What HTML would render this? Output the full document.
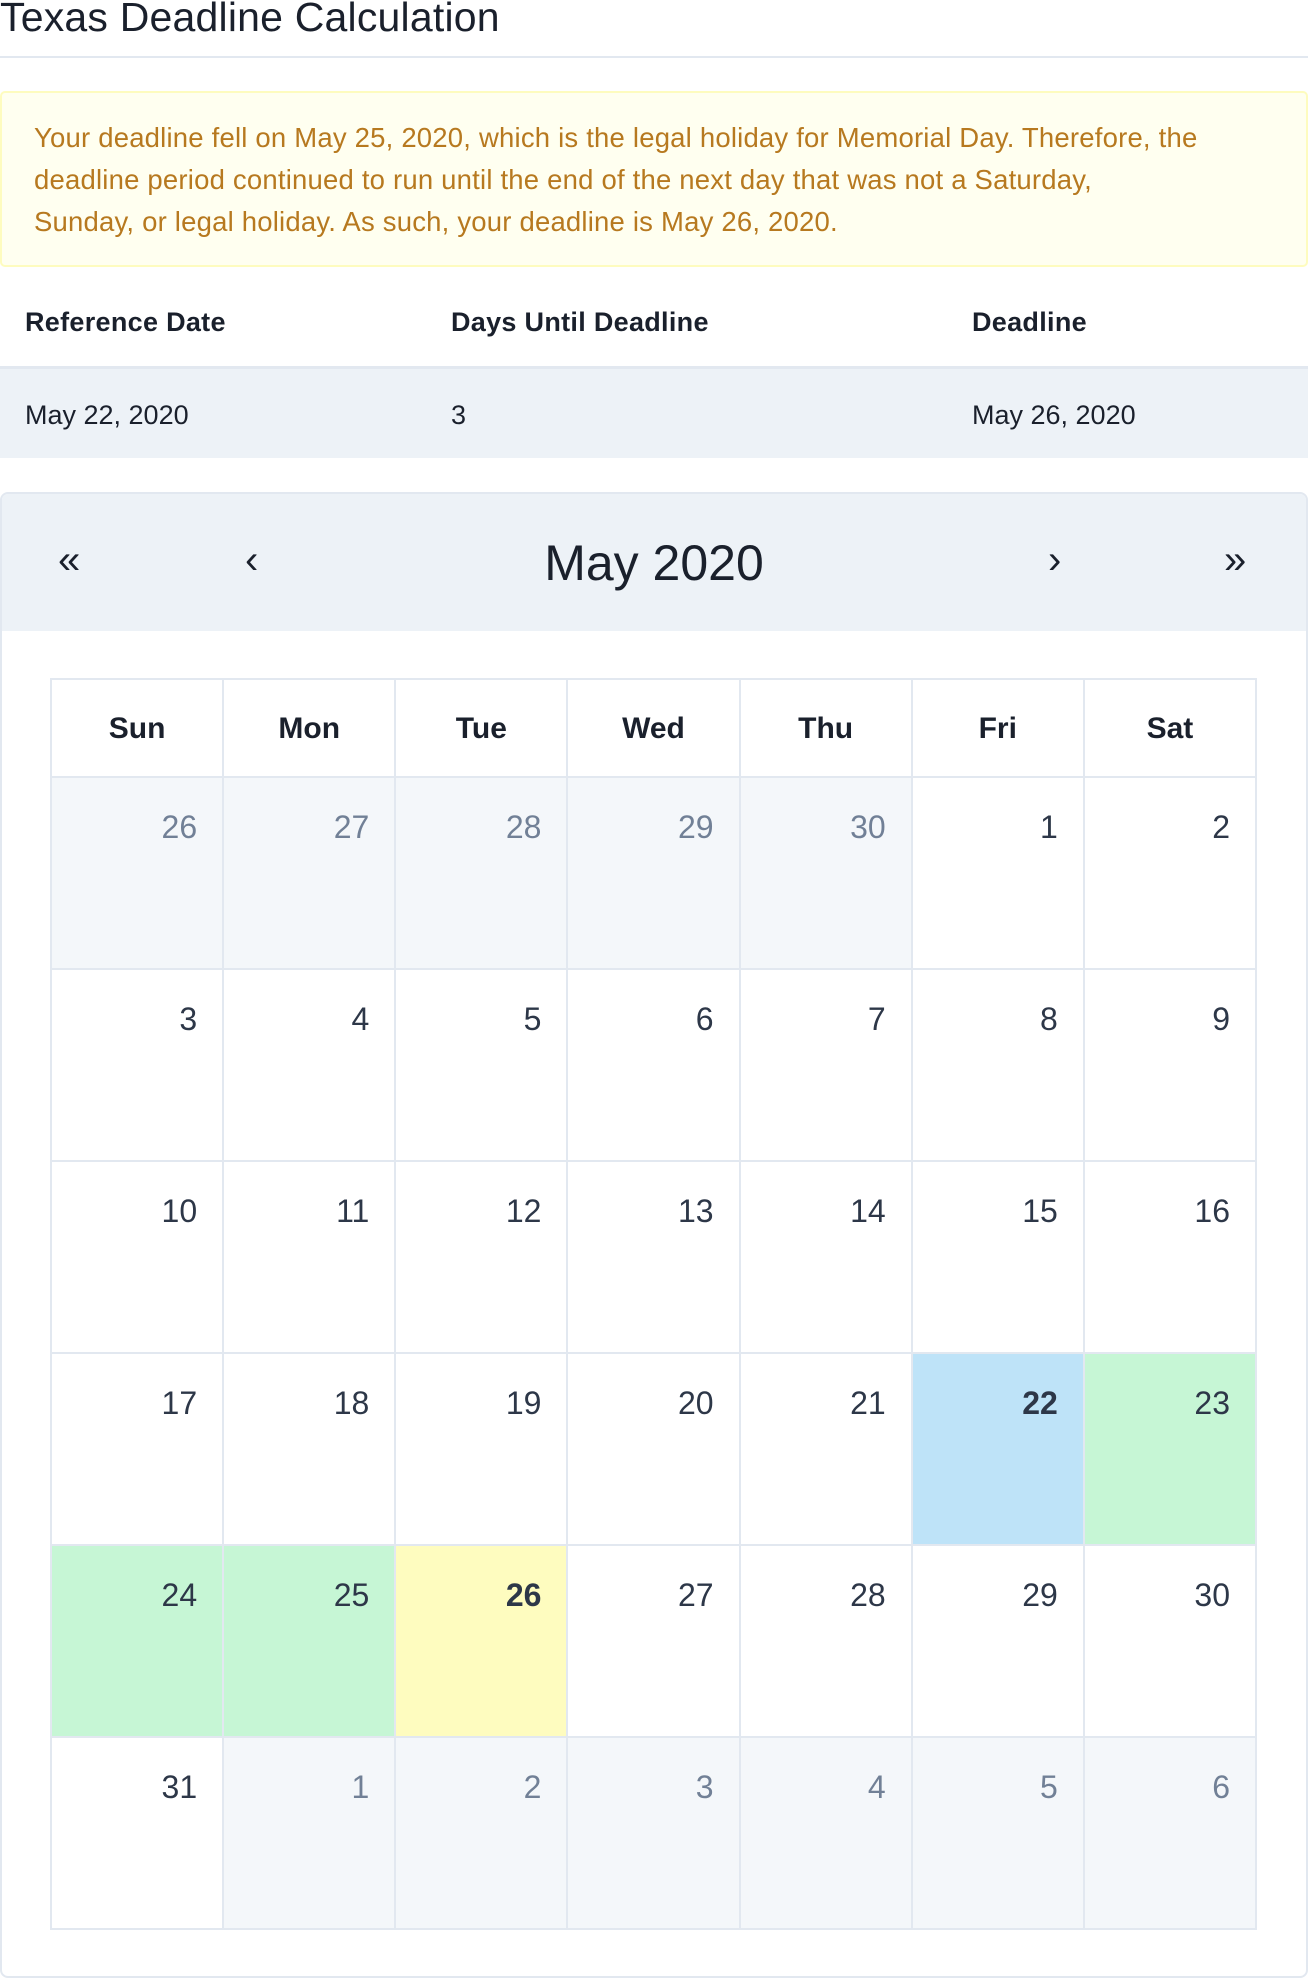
<!DOCTYPE html>
<html><head><meta charset="utf-8"><style>
*{box-sizing:border-box;margin:0;padding:0}
body{width:1308px;height:1980px;background:#fff;font-family:"Liberation Sans",sans-serif;color:#1a202c;position:relative;overflow:hidden}
h1{position:absolute;left:0;top:-8px;font-size:41px;font-weight:400;color:#1a202c;line-height:50px;letter-spacing:0.2px}
.hr{position:absolute;left:0;top:56px;width:1308px;height:2px;background:#e2e8f0}
.alert{position:absolute;left:0;top:91px;width:1308px;height:176px;background:#fffff0;border:2px solid #fefcbf;border-radius:5px;color:#b7791f;font-size:27.5px;line-height:42px;padding:24px 32px;white-space:nowrap;letter-spacing:0.2px}
.th{position:absolute;top:307px;font-size:27px;font-weight:700;color:#1a202c;letter-spacing:0.3px}
.trow{position:absolute;left:0;top:366px;width:1308px;height:92px;background:#edf2f7;border-top:3px solid #e2e8f0}
.td{position:absolute;top:400px;font-size:27px;color:#1a202c}
.card{position:absolute;left:0;top:492px;width:1308px;height:1486px;border:2px solid #e2e8f0;border-radius:8px;overflow:hidden}
.chead{position:absolute;left:0;top:0;width:1304px;height:137px;background:#edf2f7}
.nav{position:absolute;top:44px;font-size:40px;color:#1a202c}
.ctitle{position:absolute;left:0;width:1304px;top:40px;text-align:center;font-size:50px;color:#1a202c}
table{position:absolute;left:50px;top:678px;border-collapse:collapse;width:1207px}
td,th{border:2px solid #e2e8f0;width:172.4px}
th{height:98px;font-size:30px;font-weight:700;color:#1a202c;text-align:center;padding-top:2px}
td{height:192px;vertical-align:top;text-align:right;padding:31px 25px 0 0;font-size:32px;color:#2d3748}
td.o{background:#f4f7fa;color:#718096}
td.b{background:#bee3f8;font-weight:700}
td.g{background:#c6f6d5}
td.y{background:#fefcbf;font-weight:700}
</style></head><body>
<h1>Texas Deadline Calculation</h1>
<div class="hr"></div>
<div class="alert">Your deadline fell on May 25, 2020, which is the legal holiday for Memorial Day. Therefore, the<br>deadline period continued to run until the end of the next day that was not a Saturday,<br>Sunday, or legal holiday. As such, your deadline is May 26, 2020.</div>
<div class="th" style="left:25px">Reference Date</div>
<div class="th" style="left:451px">Days Until Deadline</div>
<div class="th" style="left:972px">Deadline</div>
<div class="trow"></div>
<div class="td" style="left:25px">May 22, 2020</div>
<div class="td" style="left:451px">3</div>
<div class="td" style="left:972px">May 26, 2020</div>
<div class="card"><div class="chead">
<div class="nav" style="left:56px">«</div>
<div class="nav" style="left:243px">‹</div>
<div class="ctitle">May 2020</div>
<div class="nav" style="left:1046px">›</div>
<div class="nav" style="left:1222px">»</div>
</div></div>
<table>
<tr><th>Sun</th><th>Mon</th><th>Tue</th><th>Wed</th><th>Thu</th><th>Fri</th><th>Sat</th></tr>
<tr><td class="o">26</td><td class="o">27</td><td class="o">28</td><td class="o">29</td><td class="o">30</td><td>1</td><td>2</td></tr>
<tr><td>3</td><td>4</td><td>5</td><td>6</td><td>7</td><td>8</td><td>9</td></tr>
<tr><td>10</td><td>11</td><td>12</td><td>13</td><td>14</td><td>15</td><td>16</td></tr>
<tr><td>17</td><td>18</td><td>19</td><td>20</td><td>21</td><td class="b">22</td><td class="g">23</td></tr>
<tr><td class="g">24</td><td class="g">25</td><td class="y">26</td><td>27</td><td>28</td><td>29</td><td>30</td></tr>
<tr><td>31</td><td class="o">1</td><td class="o">2</td><td class="o">3</td><td class="o">4</td><td class="o">5</td><td class="o">6</td></tr>
</table>
</body></html>
